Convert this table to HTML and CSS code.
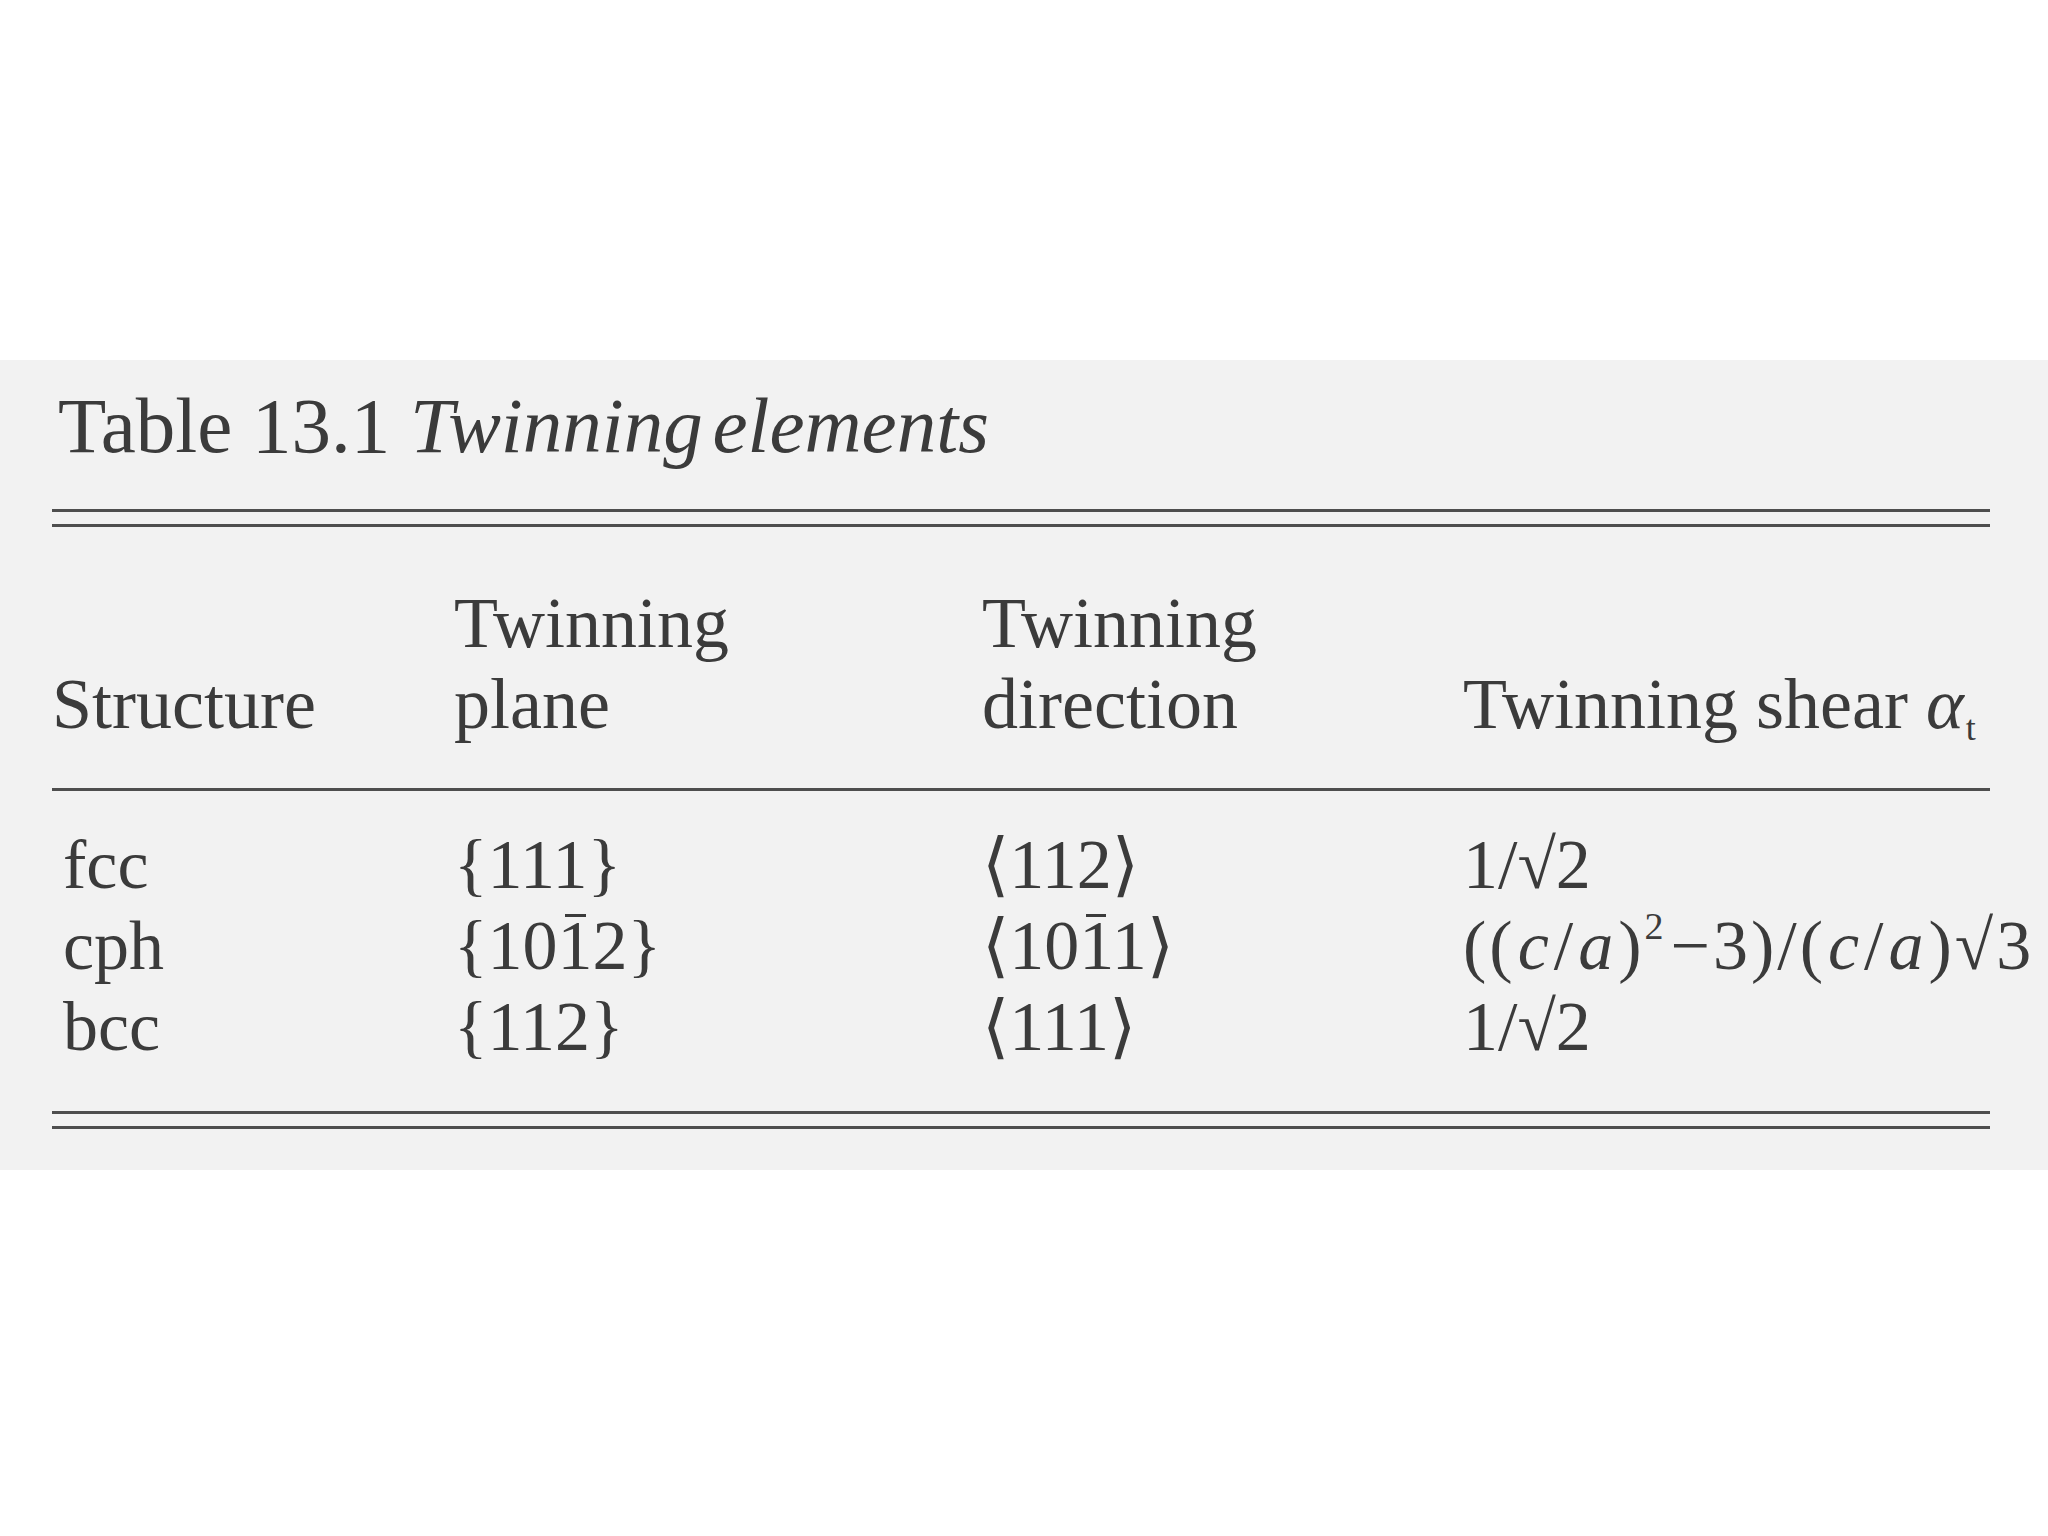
FILE: index.html
```html
<!DOCTYPE html>
<html lang="en">
<head>
<meta charset="utf-8">
<title>Table 13.1 Twinning elements</title>
<link rel="stylesheet" href="styles.css">
</head>
<body>
<section class="scan">
  <h1 class="caption">Table 13.1 <em>Twinning elements</em></h1>
  <div class="table">
    <div class="rule-double"></div>
    <div class="thead">
      <div class="th">Structure</div>
      <div class="th">Twinning<br>plane</div>
      <div class="th">Twinning<br>direction</div>
      <div class="th">Twinning shear <i class="alpha">α</i><sub class="sub">t</sub></div>
    </div>
    <div class="rule-single"></div>
    <div class="tbody">
      <div class="td first">fcc</div>
      <div class="td">{111}</div>
      <div class="td">⟨112⟩</div>
      <div class="td">1/√2</div>

      <div class="td first">cph</div>
      <div class="td">{10<span class="bar">1</span>2}</div>
      <div class="td">⟨10<span class="bar">1</span>1⟩</div>
      <div class="td formula">((<i>c</i>/<i>a</i>)<sup class="sup">2</sup>−3)/(<i>c</i>/<i>a</i>)√3</div>

      <div class="td first">bcc</div>
      <div class="td">{112}</div>
      <div class="td">⟨111⟩</div>
      <div class="td">1/√2</div>
    </div>
    <div class="rule-double"></div>
  </div>
</section>
</body>
</html>
```

FILE: styles.css
```css
html, body {
  margin: 0;
  padding: 0;
  background: #ffffff;
}

body {
  width: 2048px;
  height: 1536px;
  overflow: hidden;
  font-family: "Liberation Serif", "DejaVu Serif", serif;
  color: #3b3b3b;
}

.scan {
  margin-top: 360px;
  height: 810px;
  box-sizing: border-box;
  padding-top: 26px;
  background: #f2f2f2;
}

.caption {
  margin: 0 0 0 58px;
  font-size: 79px;
  line-height: 80px;
  font-weight: normal;
  letter-spacing: 0;
}

.caption em {
  font-style: italic;
  word-spacing: -10px;
}

.table {
  margin: 43px 0 0 52px;
  width: 1938px;
}

.rule-double {
  height: 12px;
  border-top: 3px solid #4e4e4e;
  border-bottom: 3px solid #4e4e4e;
}

.rule-single {
  border-top: 3px solid #4e4e4e;
}

.thead {
  display: grid;
  grid-template-columns: 402px 528px 481px 1fr;
  align-items: end;
  padding: 56px 0 43px;
  font-size: 72px;
  line-height: 81px;
}

.th {
  white-space: nowrap;
}

.alpha {
  font-style: italic;
}

.sub {
  font-size: 36px;
  line-height: 0;
  vertical-align: -12px;
  margin-left: 2px;
}

.tbody {
  display: grid;
  grid-template-columns: 402px 528px 481px 1fr;
  padding: 33px 0 44px;
  font-size: 70px;
  line-height: 81px;
}

.td {
  white-space: nowrap;
}

.td.first {
  padding-left: 11px;
}

.bar {
  position: relative;
}

.bar::before {
  content: "";
  position: absolute;
  left: 7px;
  right: 7px;
  top: 7px;
  border-top: 3px solid #3b3b3b;
}

.formula {
  letter-spacing: 3px;
}

.formula i {
  font-style: italic;
  margin: 0 2px;
}

.sup {
  font-size: 38px;
  line-height: 0;
  vertical-align: 30px;
  margin-right: 4px;
}
```
